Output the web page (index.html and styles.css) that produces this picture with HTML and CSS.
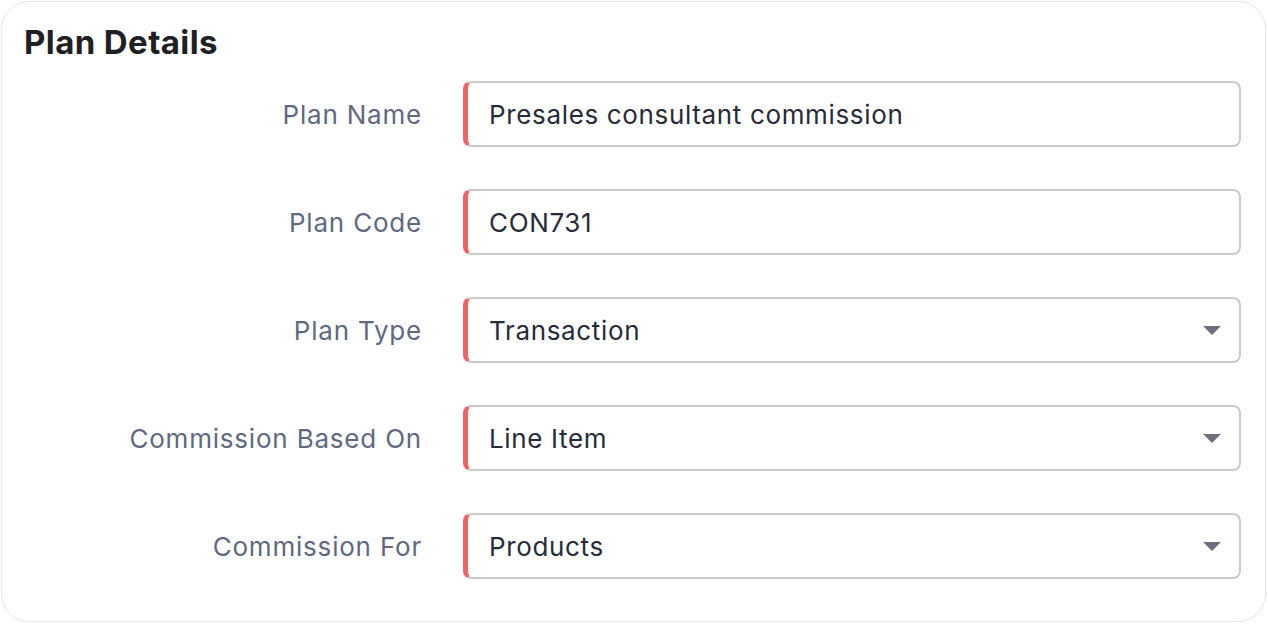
FILE: index.html
```html
<!DOCTYPE html>
<html>
<head>
<meta charset="utf-8">
<link rel="stylesheet" href="styles.css">
</head>
<body>
<div class="card">
  <h1 class="title">Plan Details</h1>
  <div class="form">
    <div class="label">Plan Name</div>
    <div class="field"><span class="value">Presales consultant commission</span></div>
    <div class="label">Plan Code</div>
    <div class="field"><span class="value">CON731</span></div>
    <div class="label">Plan Type</div>
    <div class="field"><span class="value">Transaction</span><span class="caret"></span></div>
    <div class="label">Commission Based On</div>
    <div class="field"><span class="value">Line Item</span><span class="caret"></span></div>
    <div class="label">Commission For</div>
    <div class="field"><span class="value">Products</span><span class="caret"></span></div>
  </div>
</div>
</body>
</html>
```
FILE: styles.css
```css
html, body {
  margin: 0;
  padding: 0;
  background: #ffffff;
}
body {
  padding: 1px;
  font-family: Inter, "Noto Sans", sans-serif;
}
.card {
  width: 1265px;
  height: 621px;
  box-sizing: border-box;
  border: 1px solid #e6e6ea;
  border-radius: 28px;
  padding: 18px 24px 0 22px;
}
.title {
  margin: 0;
  font-size: 33px;
  line-height: 44px;
  font-weight: 700;
  color: #1f2023;
  letter-spacing: 0.4px;
}
.form {
  margin-top: 17px;
  display: grid;
  grid-template-columns: 398px 1fr;
  column-gap: 41px;
  row-gap: 42px;
  align-items: center;
}
.label {
  text-align: right;
  font-size: 26px;
  letter-spacing: 0.8px;
  color: #606980;
}
.field {
  height: 66px;
  box-sizing: border-box;
  border: 2px solid #c9c9d1;
  border-left: 5px solid #f26262;
  border-radius: 8px;
  display: flex;
  align-items: center;
  padding: 0 18px 0 21px;
}
.value {
  flex: 1;
  font-size: 26px;
  letter-spacing: 0.65px;
  color: #282c39;
}
.caret {
  width: 0;
  height: 0;
  border-left: 9px solid transparent;
  border-right: 9px solid transparent;
  border-top: 9px solid #6e7080;
}
```
